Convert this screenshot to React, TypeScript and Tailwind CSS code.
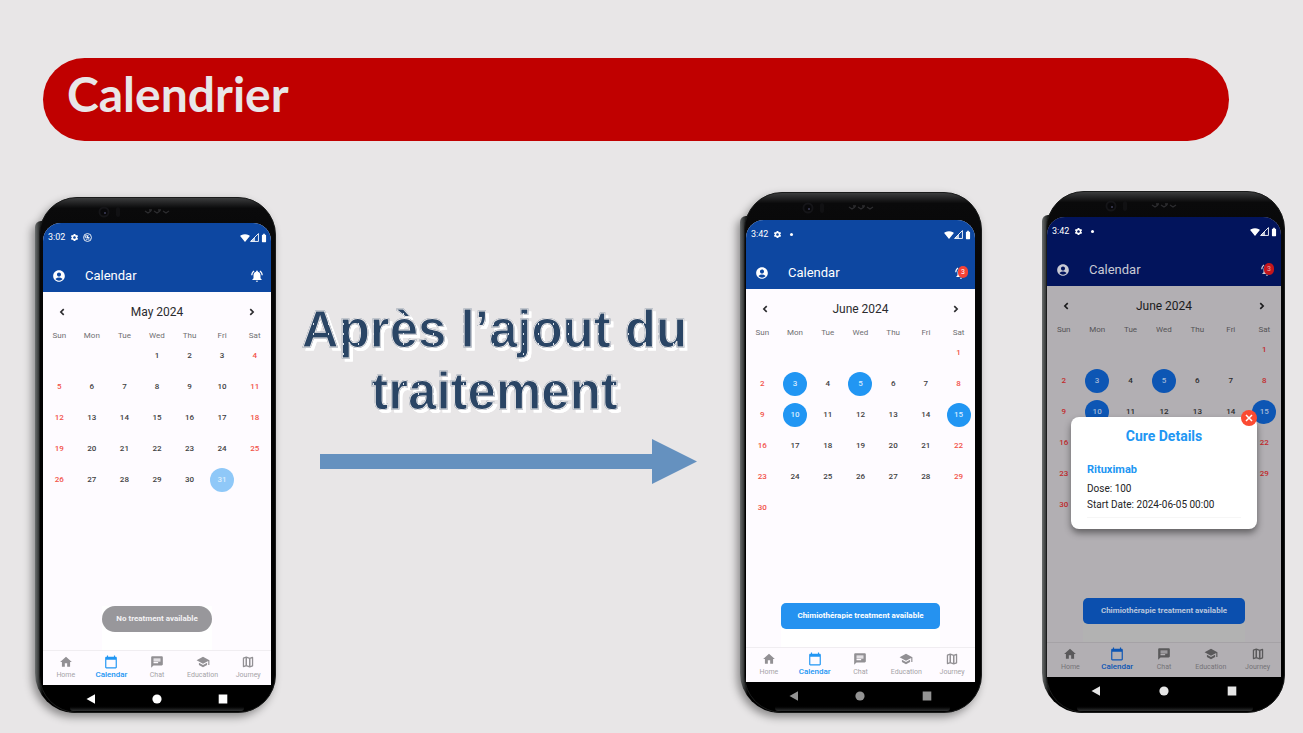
import React from "react";
import {
  MdAccountCircle,
  MdBatteryFull,
  MdCalendarToday,
  MdChat,
  MdHome,
  MdNotificationsActive,
  MdSchool,
  MdSettings,
  MdSignalWifi4Bar,
} from "react-icons/md";

type Theme = {
  header: string;
  headerText: string;
  body: string;
  patch: string;
  title: string;
  weekday: string;
  day: string;
  weekend: string;
  marked: string;
  navIcon: string;
  navLabel: string;
  navActive: string;
  navLine: string;
  badge: string;
  cta: string;
};

const light: Theme = {
  header: "bg-[#0d47a1]",
  headerText: "text-white",
  body: "bg-[#fefbff]",
  patch: "bg-white",
  title: "text-[#2b2b2e]",
  weekday: "text-[#6f6f72]",
  day: "text-[#3f3f42]",
  weekend: "text-[#f25248]",
  marked: "bg-[#2196f3] text-[#d6ecff]",
  navIcon: "text-[#929094]",
  navLabel: "text-[#a5a3a7]",
  navActive: "text-[#2196f3]",
  navLine: "border-[#f0edf1]",
  badge: "bg-[#f44336] text-white",
  cta: "rounded-[5px] bg-[#2592f0] px-4 text-white",
};

const dimmed: Theme = {
  header: "bg-[#02145c]",
  headerText: "text-[#c9cad4]",
  body: "bg-[#b2afb3]",
  patch: "bg-[#b2b2b2]",
  title: "text-[#1b1b1d]",
  weekday: "text-[#545356]",
  day: "text-[#2a2a2c]",
  weekend: "text-[#c22a2c]",
  marked: "bg-[#0d56b4] text-[#a5bad8]",
  navIcon: "text-[#5a595b]",
  navLabel: "text-[#757377]",
  navActive: "text-[#0d56b4]",
  navLine: "border-[#a5a2a6]",
  badge: "bg-[#c4161c] text-[#e0b0b0]",
  cta: "rounded-[5px] bg-[#0b4fae] px-[18px] text-[#b9c6dc]",
};

const weekdays = ["Sun", "Mon", "Tue", "Wed", "Thu", "Fri", "Sat"];

function buildWeeks(offset: number, count: number): (number | null)[][] {
  const cells: (number | null)[] = [];
  for (let i = 0; i < offset; i++) cells.push(null);
  for (let d = 1; d <= count; d++) cells.push(d);
  while (cells.length % 7 !== 0) cells.push(null);
  const weeks: (number | null)[][] = [];
  for (let i = 0; i < cells.length; i += 7) weeks.push(cells.slice(i, i + 7));
  return weeks;
}

function MonthTable({
  offset,
  count,
  marked,
  theme,
  markedClass,
}: {
  offset: number;
  count: number;
  marked: number[];
  theme: Theme;
  markedClass: string;
}) {
  return (
    <table className="w-full table-fixed border-collapse text-center text-[8px] leading-[9px]">
      <thead>
        <tr>
          {weekdays.map((d) => (
            <th key={d} className={`p-0 font-normal ${theme.weekday}`}>
              {d}
            </th>
          ))}
        </tr>
      </thead>
      <tbody>
        {buildWeeks(offset, count).map((week, w) => (
          <tr key={w} className="h-[31px]">
            {week.map((d, i) => (
              <td key={i} className="p-0 align-middle font-medium">
                {d !== null && (
                  <span
                    className={`mx-auto flex size-6 items-center justify-center rounded-full ${
                      marked.includes(d) ? markedClass : i === 0 || i === 6 ? theme.weekend : theme.day
                    }`}
                  >
                    {d}
                  </span>
                )}
              </td>
            ))}
          </tr>
        ))}
      </tbody>
    </table>
  );
}

function Stroke({ d, className, width }: { d: string; className: string; width: number }) {
  return (
    <svg viewBox="0 0 24 24" className={className} fill="none" stroke="currentColor" strokeWidth={width} aria-hidden="true">
      <path d={d} />
    </svg>
  );
}

function MapIcon({ className }: { className?: string }) {
  return (
    <svg viewBox="0 0 24 24" className={className} fill="none" stroke="currentColor" aria-hidden="true">
      <path d="M4.2 5.4L9 3.8l6 2.1 4.8-1.8v14.5L15 20.2l-6-2.1-4.8 1.8z" strokeWidth="2.2" strokeLinejoin="round" />
      <path d="M9 4v14M15 6v14" strokeWidth="2.6" />
    </svg>
  );
}

const tabs = [
  { label: "Home", Icon: MdHome },
  { label: "Calendar", Icon: MdCalendarToday },
  { label: "Chat", Icon: MdChat },
  { label: "Education", Icon: MdSchool },
  { label: "Journey", Icon: MapIcon },
];

function Speaker() {
  return (
    <svg viewBox="0 0 118 12" className="h-3 w-[118px]" aria-hidden="true">
      <circle cx="6" cy="6" r="5.5" fill="#151518" />
      <circle cx="6" cy="6" r="3.6" fill="#08080a" />
      <circle cx="7" cy="7" r="1.1" fill="#3b3b55" />
      <rect x="18" y="1" width="4" height="10" rx="2" fill="#111113" />
      <path
        d="M47 5l3 2 3-2M56 5l3 2 3-2M65 5l3 2 3-2M51 4h3M60 4h3"
        fill="none"
        stroke="#2c2c2f"
        strokeWidth="1.4"
      />
    </svg>
  );
}

type PhoneProps = {
  time: string;
  month: string;
  offset: number;
  count: number;
  marked: number[];
  markedClass?: string;
  notice: string;
  noticeClass?: string;
  badge?: number;
  theme: Theme;
  frame: string;
  bezel: string;
  shadow: string;
  chin: string;
  keys: string;
  children?: React.ReactNode;
};

function Phone({
  time,
  month,
  offset,
  count,
  marked,
  markedClass,
  notice,
  noticeClass,
  badge,
  theme,
  frame,
  bezel,
  shadow,
  chin,
  keys,
  children,
}: PhoneProps) {
  return (
    <section aria-label={month} className={`relative isolate flex shrink-0 flex-col font-[Roboto,sans-serif] ${frame}`}>
      <div className={`absolute inset-0 -z-10 ${shadow}`}>
        <div className="absolute bottom-0 left-[1px] top-6 w-24 rounded-bl-[40px] rounded-tl-[6px] bg-linear-to-r from-[#6d7070] via-[#2a2c2c] via-5% to-black to-10%" />
        <div className="absolute inset-y-0 left-[5px] right-0 rounded-[38px] border border-[#1b1c1c] bg-black bg-linear-to-b from-[#3c3d3e] via-[#0a0a0b] via-2% to-black" />
        <div className="absolute bottom-[2px] left-9 right-8 h-[6px] rounded-full bg-linear-to-b from-black to-[#303132]" />
      </div>

      <div className={`flex items-center justify-center pt-1 ${bezel}`}>
        <Speaker />
      </div>

      <div className={`relative flex flex-1 flex-col overflow-hidden rounded-t-[18px] ${theme.body}`}>
        <header className={theme.header}>
          <div className="flex h-[29px] items-center pl-[5px] pr-[2px] text-[9px] text-white">
            <span>{time}</span>
            <MdSettings className="ml-[5px] size-[9px]" />
            {badge ? (
              <span className="ml-2 size-[3px] rounded-full bg-white" />
            ) : (
              <svg viewBox="0 0 16 16" className="ml-1 size-[9px]" fill="none" stroke="white" aria-hidden="true">
                <circle cx="8" cy="8" r="7" strokeWidth="1.6" />
                <path d="M4 9V5h6M6 8h5M8 5v4M5 11h3l3-3M10 12l2-2" strokeWidth="1.6" />
              </svg>
            )}
            <MdSignalWifi4Bar className="ml-auto size-[10px]" />
            <svg viewBox="0 0 16 16" className="size-[9px]" aria-hidden="true">
              <path d="M1 15L15 1v14z" fill="none" stroke="white" strokeWidth="1.6" />
              <path d="M1 15l8-8v8z" fill="white" opacity="0.75" />
            </svg>
            <MdBatteryFull className="size-[10px]" />
          </div>
          <div className={`mt-2 flex h-8 items-center pl-[9px] pr-[7px] ${theme.headerText}`}>
            <button type="button" aria-label="Profile">
              <MdAccountCircle className="size-[14px]" />
            </button>
            <h2 className="ml-[19px] text-[13px] leading-4">Calendar</h2>
            <button type="button" aria-label="Notifications" className="relative ml-auto">
              <MdNotificationsActive className="size-[14px]" />
              {badge && (
                <span
                  className={`absolute right-0 top-0 flex h-3 w-[10px] items-center justify-center rounded-full text-[7px] ${theme.badge}`}
                >
                  {badge}
                </span>
              )}
            </button>
          </div>
        </header>

        <div className={`flex h-[39px] items-center justify-between px-3 ${theme.title}`}>
          <button type="button" aria-label="Previous month">
            <Stroke d="M15 7l-5 5 5 5" className="size-[14px]" width={2.8} />
          </button>
          <h3 className="text-[12px] leading-4">{month}</h3>
          <button type="button" aria-label="Next month">
            <Stroke d="M9 7l5 5-5 5" className="size-[14px]" width={2.8} />
          </button>
        </div>
        <MonthTable
          offset={offset}
          count={count}
          marked={marked}
          theme={theme}
          markedClass={markedClass ?? theme.marked}
        />

        <div className={`mx-auto mt-auto pb-[18px] ${theme.patch}`}>
          <button
            type="button"
            className={`block h-[26px] whitespace-nowrap text-[8px] font-bold ${noticeClass ?? theme.cta}`}
          >
            {notice}
          </button>
        </div>

        <nav className={`grid h-[35px] grid-cols-5 border-t ${theme.navLine}`}>
          {tabs.map(({ label, Icon }) => {
            const active = label === "Calendar";
            return (
              <a key={label} href="#" className="flex flex-col items-center pt-1">
                <Icon className={`size-[14px] ${active ? theme.navActive : theme.navIcon}`} />
                <span
                  className={`leading-[11px] ${
                    active ? `text-[8px] font-medium ${theme.navActive}` : `pt-px text-[7px] ${theme.navLabel}`
                  }`}
                >
                  {label}
                </span>
              </a>
            );
          })}
        </nav>
        {children}
      </div>

      <div className={`grid grid-cols-3 justify-items-center px-[15px] pt-[9px] ${chin} ${keys}`}>
        <button type="button" aria-label="Back" className="size-[10px]">
          <svg viewBox="0 0 10 10" fill="currentColor">
            <path d="M0.5 5L9 0.2v9.6z" />
          </svg>
        </button>
        <button type="button" aria-label="Home screen" className="size-[10px]">
          <svg viewBox="0 0 10 10" fill="currentColor">
            <circle cx="5" cy="5" r="4.6" />
          </svg>
        </button>
        <button type="button" aria-label="Recent apps" className="size-[10px]">
          <svg viewBox="0 0 10 10" fill="currentColor">
            <path d="M0.7 0.5h8.6v9H0.7z" />
          </svg>
        </button>
      </div>
    </section>
  );
}

function CureDialog() {
  return (
    <div
      role="dialog"
      aria-label="Cure Details"
      className="absolute left-6 right-6 top-[200px] rounded-[8px] bg-white px-4 pb-[11px] pt-[11px] shadow-[0_4px_7px_rgba(0,0,0,0.45)]"
    >
      <h4 className="text-center text-[14px] font-bold leading-4 text-[#2196f3]">Cure Details</h4>
      <h5 className="mt-5 text-[11px] font-bold leading-3 text-[#2196f3]">Rituximab</h5>
      <p className="mt-[5px] whitespace-nowrap text-[10px] leading-4 text-[#232325]">Dose: 100</p>
      <p className="whitespace-nowrap border-b border-[#f6f6f6] pb-1 text-[10px] leading-4 text-[#232325]">
        Start Date: 2024-06-05 00:00
      </p>
      <button
        type="button"
        aria-label="Close"
        className="absolute -top-[7px] right-0 flex size-4 items-center justify-center rounded-full bg-[#fb4a32] text-white"
      >
        <Stroke d="M6 6l12 12M18 6L6 18" className="size-3" width={3} />
      </button>
    </div>
  );
}

export default function App() {
  return (
    <main className="min-h-screen bg-[#e8e6e7] pt-[58px]">
      <header className="ml-[43px] mr-[74px] flex h-[83px] items-start rounded-full bg-[#c00000] pl-6 pt-2">
        <h1 className="font-[Lato,sans-serif] text-[48px] font-bold leading-[56px] text-[#e8e6e7]">Calendrier</h1>
      </header>

      <div className="flex items-end pb-5 pl-[34px] pr-[18px] pt-[50px]">
        <Phone
          time="3:02"
          month="May 2024"
          offset={3}
          count={31}
          marked={[31]}
          markedClass="bg-[#8fc8f8] text-[#dceefd]"
          notice="No treatment available"
          noticeClass="rounded-full bg-[#98979b] px-[14px] text-[#f3f2f4]"
          theme={light}
          frame="min-h-[516px] w-[242px] pl-[9px] pr-[5px]"
          bezel="h-[26px]"
          shadow="[filter:drop-shadow(-3px_4px_4px_rgba(0,0,0,0.4))]"
          chin="h-[28px]"
          keys="text-white"
        />

        <div className="flex-1 self-start pt-[108px]">
          <p className="bg-[#2a4565] bg-[radial-gradient(circle,#dfe6ee_0.5px,transparent_0.6px)] bg-size-[15px_10px] bg-clip-text pr-[26px] text-center font-['Liberation_Sans',sans-serif] text-[51px] font-bold leading-[62px] text-transparent [-webkit-text-stroke:1px_#e8e6e7] [filter:drop-shadow(3px_3px_0_#ffffff)]">
            Après l’ajout du traitement
          </p>
          <div className="ml-11 mr-[42px] mt-4 flex items-center" aria-hidden="true">
            <div className="h-[15px] flex-1 bg-[#6591bf]" />
            <svg viewBox="0 0 45 45" className="size-[45px]">
              <path d="M0 0L45 22.5L0 45z" fill="#6591bf" />
            </svg>
          </div>
        </div>

        <Phone
          time="3:42"
          month="June 2024"
          offset={6}
          count={30}
          marked={[3, 5, 10, 15]}
          notice="Chimiothérapie treatment available"
          badge={3}
          theme={light}
          frame="min-h-[521px] w-[243px] pl-[7px] pr-[7px]"
          bezel="h-[28px]"
          shadow="[filter:drop-shadow(-3px_4px_4px_rgba(0,0,0,0.4))]"
          chin="h-[31px]"
          keys="text-[#939393]"
        />

        <div className="w-[59px] shrink-0" />

        <Phone
          time="3:42"
          month="June 2024"
          offset={6}
          count={30}
          marked={[3, 5, 10, 15]}
          notice="Chimiothérapie treatment available"
          badge={3}
          theme={dimmed}
          frame="min-h-[522px] w-[244px] pl-[6px] pr-[4px]"
          bezel="h-[26px]"
          shadow="shadow-none"
          chin="h-[36px]"
          keys="text-[#e6e6e6]"
        >
          <CureDialog />
        </Phone>
      </div>
    </main>
  );
}
